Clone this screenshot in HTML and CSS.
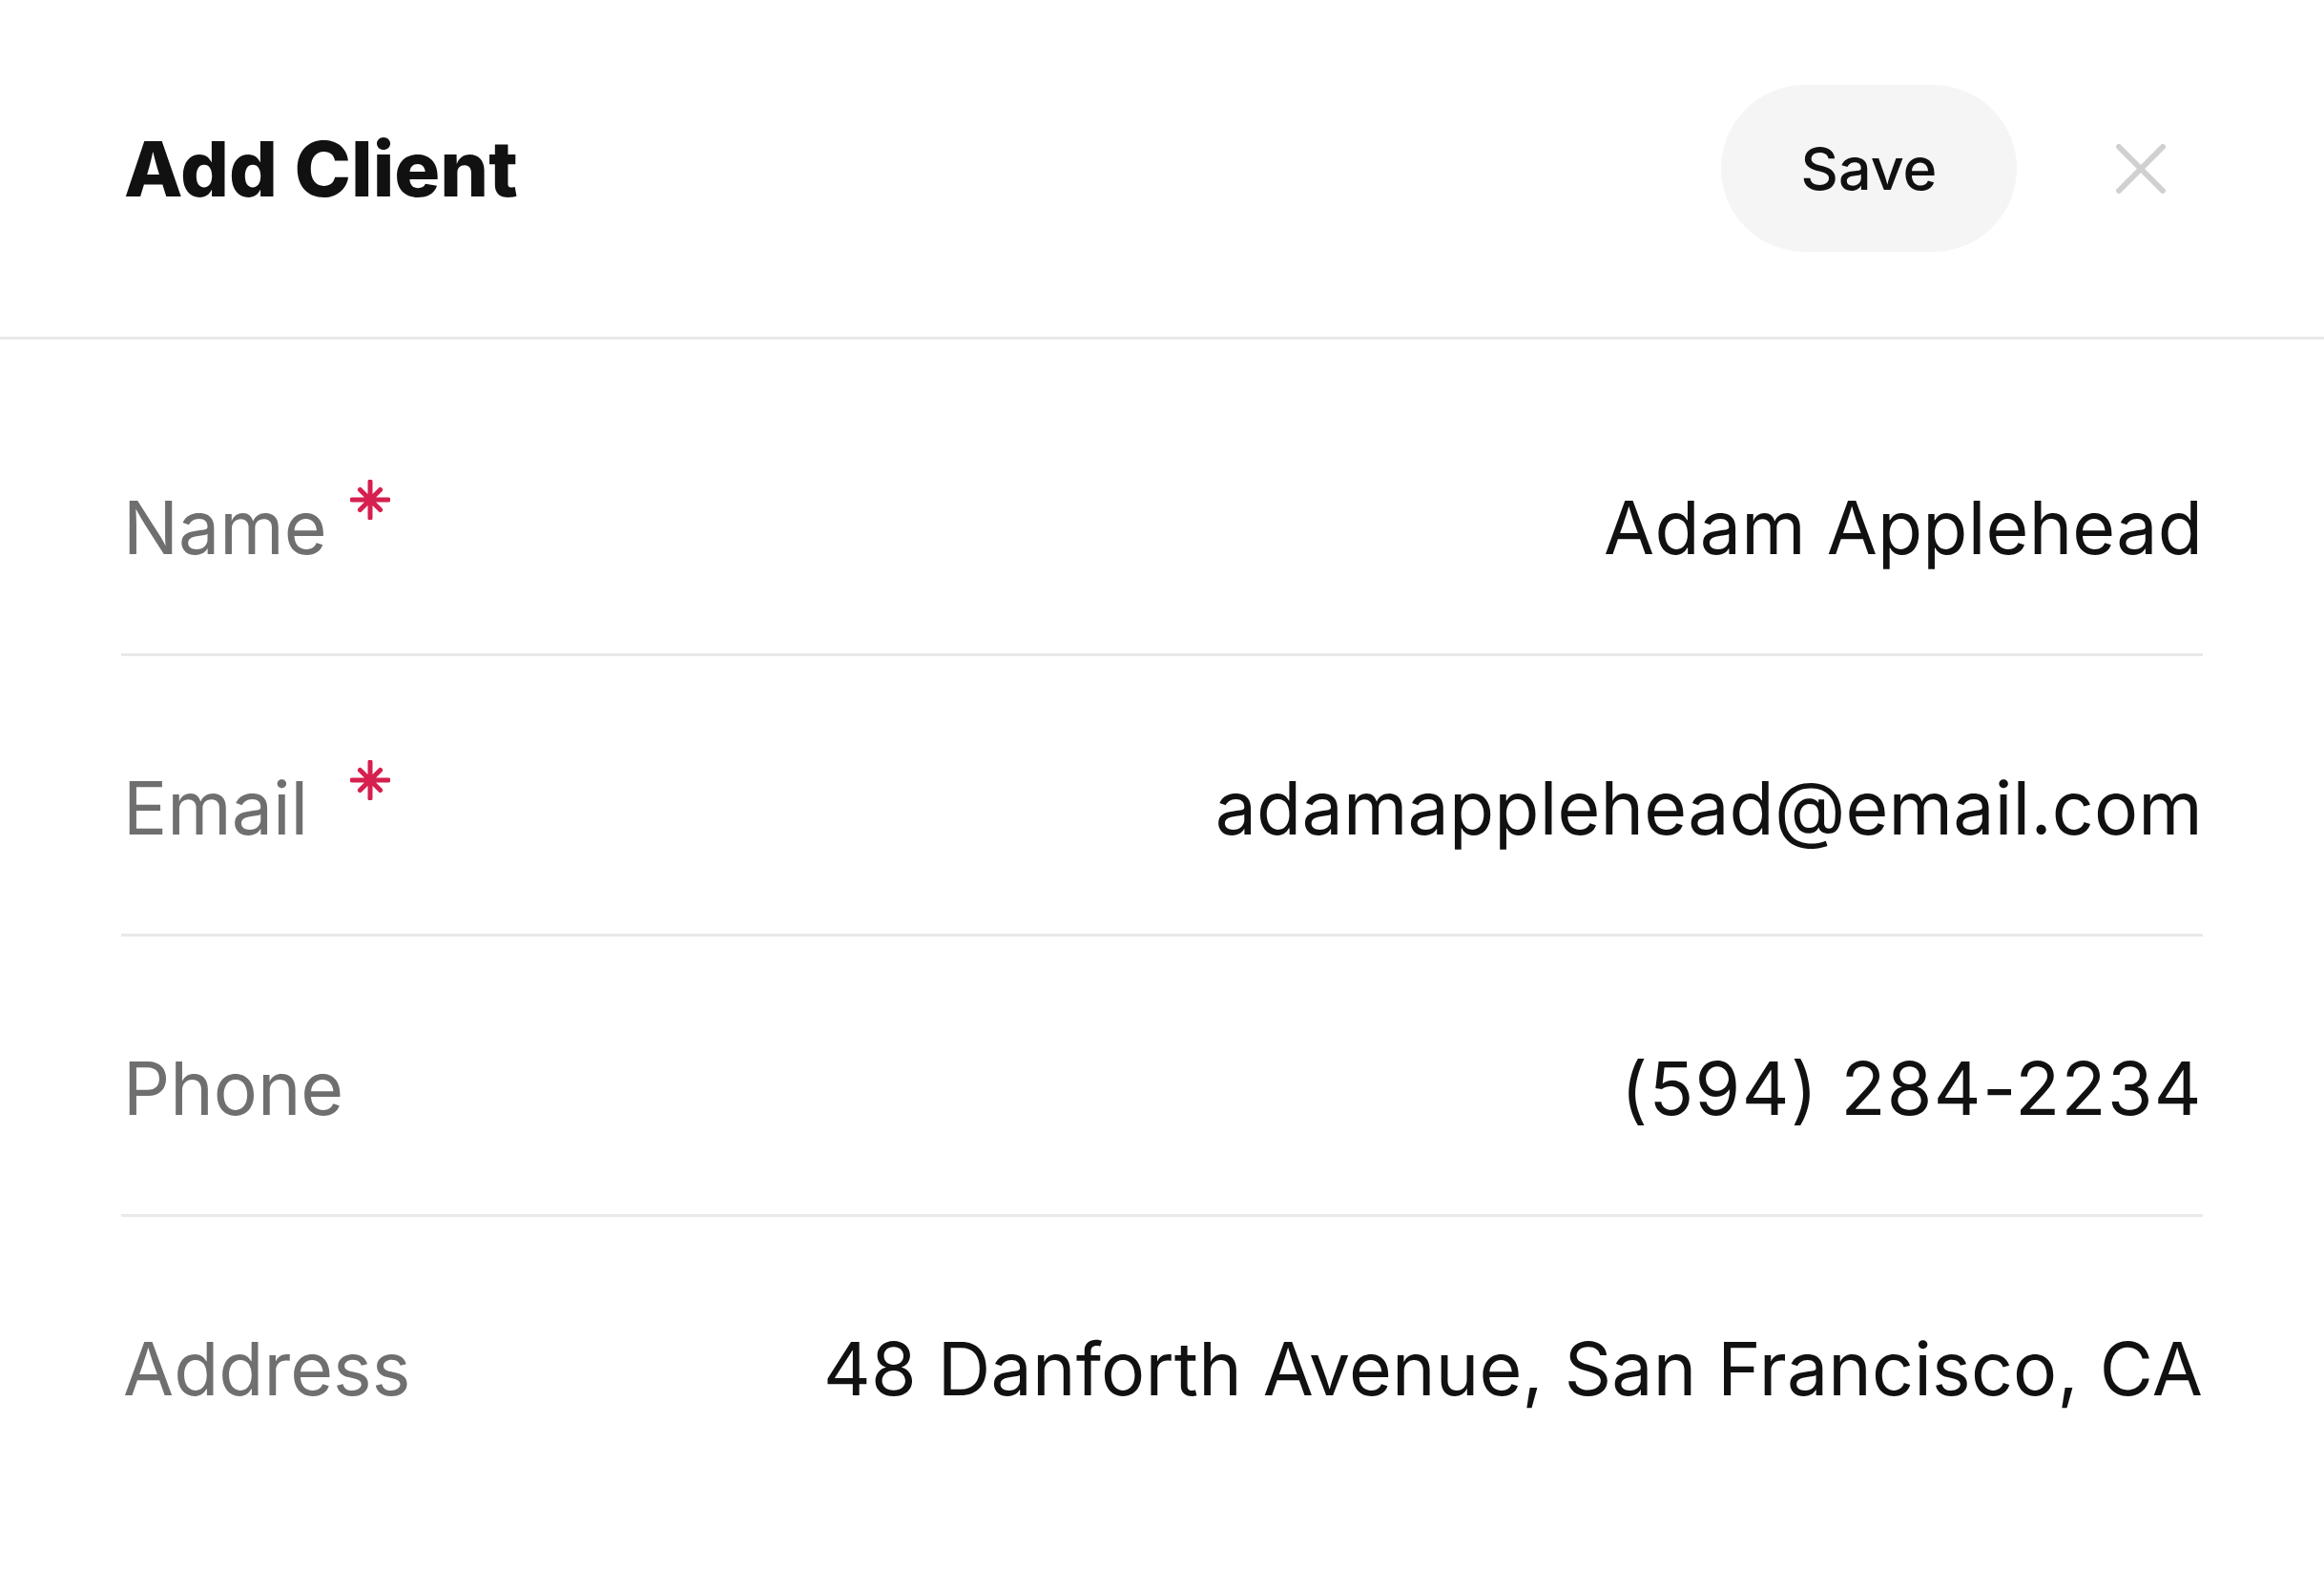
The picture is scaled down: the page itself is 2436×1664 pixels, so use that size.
FILE: index.html
```html
<!DOCTYPE html>
<html lang="en">
<head>
  <meta charset="UTF-8" />
  <title>Add Client</title>
  <meta name="viewport" content="width=device-width, initial-scale=1.0"/>
  <link rel="stylesheet" href="styles.css">
</head>
<body>
  <div class="sheet">
    <header class="sheet-head">
      <h1>Add Client</h1>
      <div class="actions">
        <button class="save-btn" type="button">Save</button>
        <button class="close-btn" type="button" aria-label="Close">
          <svg viewBox="0 0 54 54" width="54" height="54">
            <path d="M4 4 L50 50 M50 4 L4 50" stroke="#d0d0d0" stroke-width="6" stroke-linecap="round" fill="none"/>
          </svg>
        </button>
      </div>
    </header>

    <div class="fields">
      <div class="field">
        <div class="label"><span class="label-text">Name</span><svg class="req" viewBox="0 0 42 42" width="42" height="42"><path d="M21 2 V40 M2 21 H40 M10.4 10.4 L31.6 31.6 M31.6 10.4 L10.4 31.6" stroke="#d6204f" stroke-width="5" stroke-linecap="round" fill="none"/></svg></div>
        <div class="value">Adam Applehead</div>
      </div>
      <div class="field">
        <div class="label"><span class="label-text">Email</span><svg class="req" viewBox="0 0 42 42" width="42" height="42"><path d="M21 2 V40 M2 21 H40 M10.4 10.4 L31.6 31.6 M31.6 10.4 L10.4 31.6" stroke="#d6204f" stroke-width="5" stroke-linecap="round" fill="none"/></svg></div>
        <div class="value">adamapplehead@email.com</div>
      </div>
      <div class="field">
        <div class="label"><span class="label-text">Phone</span></div>
        <div class="value num">(594) 284-2234</div>
      </div>
      <div class="field">
        <div class="label"><span class="label-text">Address</span></div>
        <div class="value">48 Danforth Avenue, San Francisco, CA</div>
      </div>
    </div>
  </div>
</body>
</html>
```

FILE: styles.css
```css
body {
  margin: 0;
  background: #fff;
  color: #111;
  font-family: Inter, "Noto Sans", sans-serif;
}
.sheet-head {
  display: flex;
  align-items: center;
  justify-content: space-between;
  height: 353px;
  padding: 0 165px 0 130px;
  border-bottom: 3px solid #e9e9e9;
}
h1 {
  margin: 0;
  font-size: 80px;
  font-weight: 800;
  color: #111;
}
.actions {
  display: flex;
  align-items: center;
  gap: 103px;
}
.save-btn {
  width: 310px;
  height: 175px;
  border: none;
  border-radius: 88px;
  background: #f5f5f5;
  color: #111;
  font-family: Inter, sans-serif;
  font-size: 61px;
  font-weight: 500;
  cursor: pointer;
}
.close-btn {
  display: flex;
  padding: 0;
  border: none;
  background: none;
  cursor: pointer;
}
.fields {
  margin: 0 127px;
  padding-top: 38px;
}
.field {
  display: flex;
  align-items: center;
  justify-content: space-between;
  height: 96px;
  padding: 111px 0 84px;
  border-bottom: 3px solid #e9e9e9;
  font-size: 77px;
  line-height: 96px;
}
.field:last-child {
  border-bottom: none;
}
.label {
  display: flex;
  align-items: flex-start;
  color: #6f6f6f;
}
.label-text {
  width: 238px;
  margin-left: 2px;
}
.req {
  margin-top: -2px;
}
.value {
  text-align: right;
  color: #111;
  letter-spacing: 0.2px;
}
.value.num {
  letter-spacing: 1.4px;
}
```
